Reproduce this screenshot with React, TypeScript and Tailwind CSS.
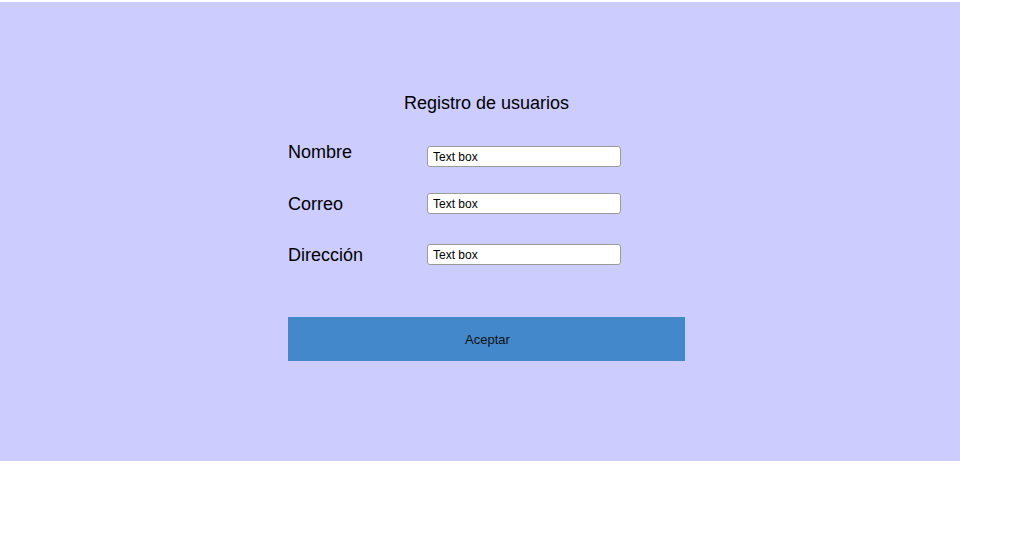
export default function App() {
  return (
    <div className="min-h-screen bg-white pt-[2px] font-['Liberation_Sans',Arial,sans-serif] text-black">
      <div className="w-[960px] h-[459px] bg-[#ccccff] pt-[91px] pl-[288px]">
        <div className="w-[397px]">
          <h1 className="text-center text-[18px] leading-[21px] font-normal">Registro de usuarios</h1>

          <form className="mt-[27px]">
            <div className="flex items-start h-[26px]">
              <label htmlFor="nombre" className="w-[139px] mt-[1px] text-[18px] leading-[21px]">
                Nombre
              </label>
              <input
                id="nombre"
                type="text"
                defaultValue="Text box"
                className="mt-[5px] w-[194px] h-[21px] px-[5px] text-[12px] bg-white border border-[#9a9a9a] rounded-[3px] outline-none"
              />
            </div>

            <div className="flex items-start h-[21px] mt-[26px]">
              <label htmlFor="correo" className="w-[139px] mt-[1px] text-[18px] leading-[21px]">
                Correo
              </label>
              <input
                id="correo"
                type="text"
                defaultValue="Text box"
                className="w-[194px] h-[21px] px-[5px] text-[12px] bg-white border border-[#9a9a9a] rounded-[3px] outline-none"
              />
            </div>

            <div className="flex items-start h-[21px] mt-[30px]">
              <label htmlFor="direccion" className="w-[139px] mt-[1px] text-[18px] leading-[21px]">
                Dirección
              </label>
              <input
                id="direccion"
                type="text"
                defaultValue="Text box"
                className="w-[194px] h-[21px] px-[5px] text-[12px] bg-white border border-[#9a9a9a] rounded-[3px] outline-none"
              />
            </div>

            <button
              type="button"
              className="mt-[52px] w-[397px] h-[44px] pl-[2px] pt-[2px] bg-[#4488cc] text-[13px] text-[#111]"
            >
              Aceptar
            </button>
          </form>
        </div>
      </div>
    </div>
  );
}
